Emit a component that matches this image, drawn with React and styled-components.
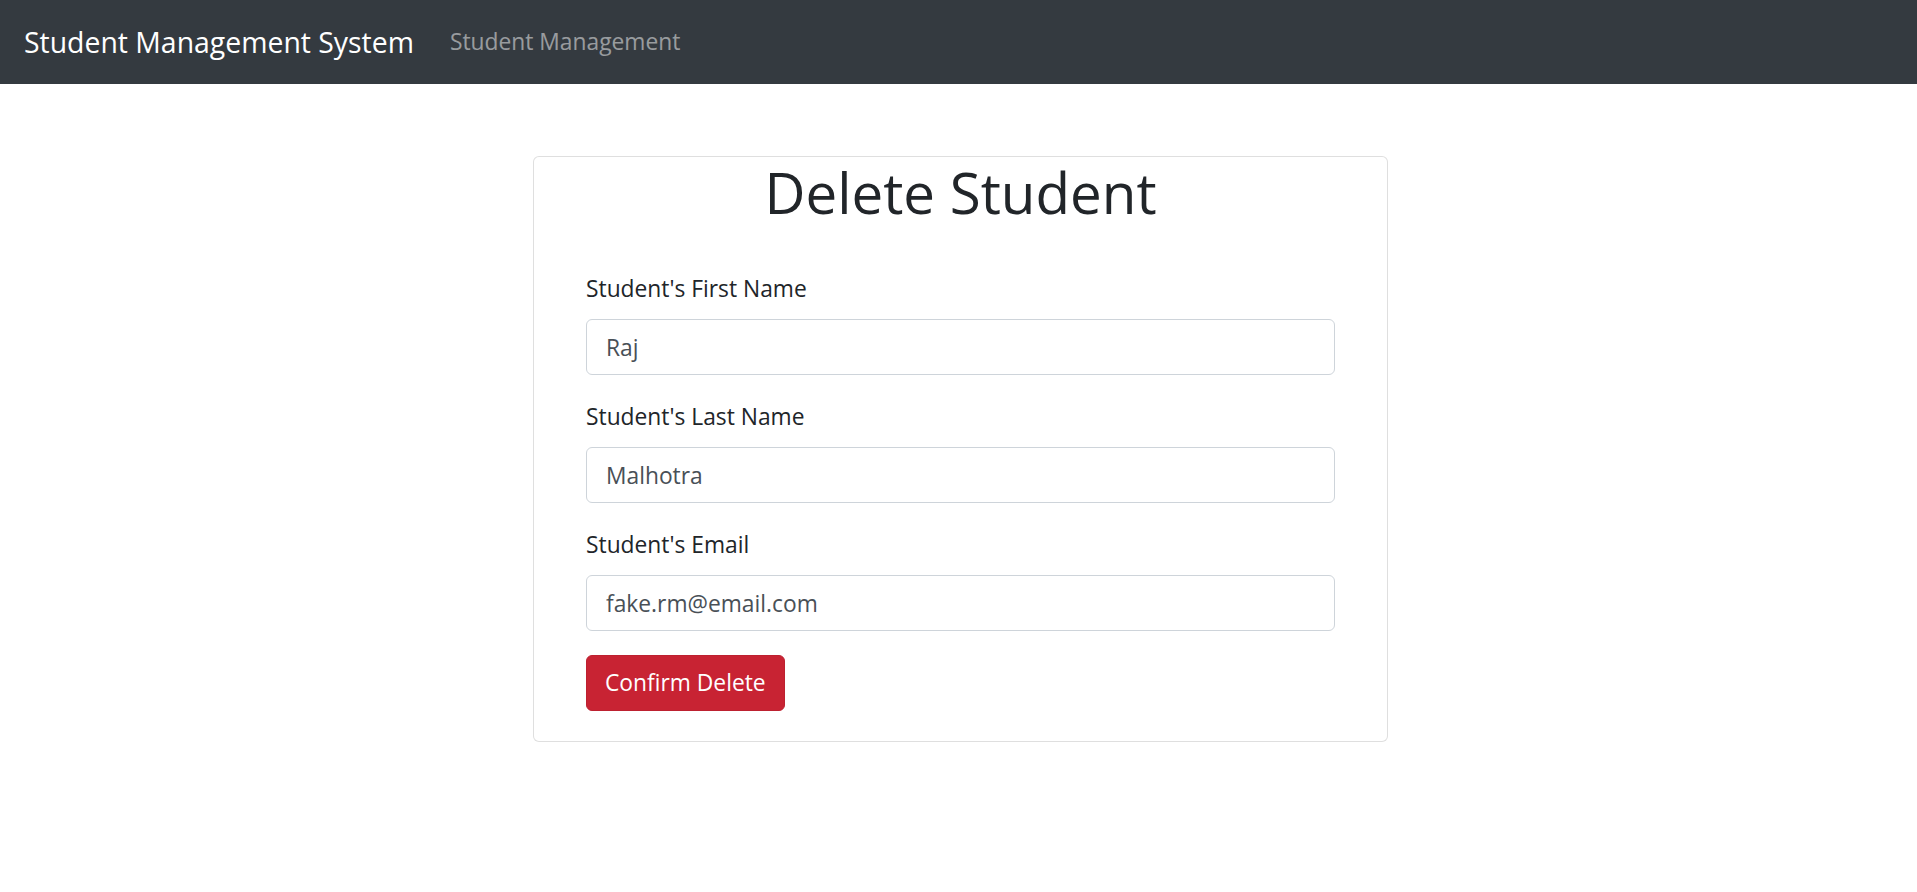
import React from 'react'
import styled, { createGlobalStyle } from 'styled-components'

const GlobalStyle = createGlobalStyle`
  body {
    margin: 0;
    background: #fff;
    font-family: "Open Sans", "Noto Sans", "Liberation Sans", sans-serif;
    color: #212529;
  }
`

const Navbar = styled.nav`
  height: 84px;
  box-sizing: border-box;
  padding: 12px 24px;
  background: #343a40;
  display: flex;
  align-items: center;
`

const Brand = styled.a`
  font-size: 28.4px;
  line-height: 45px;
  color: #fff;
  margin-right: 24px;
  text-decoration: none;
  white-space: nowrap;
`

const NavItem = styled.a`
  font-size: 22.8px;
  line-height: 36px;
  padding: 0 12px;
  color: rgba(255, 255, 255, 0.5);
  text-decoration: none;
`

const Page = styled.main`
  display: flex;
  justify-content: center;
  padding: 72px 0 0 4px;
`

const Card = styled.div`
  width: 855px;
  box-sizing: border-box;
  border: 1px solid rgba(0, 0, 0, 0.125);
  border-radius: 6px;
  background: #fff;
`

const Title = styled.h1`
  margin: 0 0 12px;
  font-size: 56.5px;
  font-weight: 400;
  line-height: 72px;
  text-align: center;
  color: #212529;
`

const CardBody = styled.form`
  padding: 30px 52px;
`

const FormGroup = styled.div`
  margin-bottom: 24px;
`

const Label = styled.label`
  display: block;
  font-size: 22.8px;
  line-height: 36px;
  margin-bottom: 12px;
  color: #212529;
`

const Input = styled.input`
  display: block;
  width: 100%;
  height: 56px;
  box-sizing: border-box;
  padding: 9px 18px 9px 19px;
  font-family: inherit;
  font-size: 22.8px;
  line-height: 36px;
  color: #495057;
  background: #fff;
  border: 1px solid #ced4da;
  border-radius: 6px;
  outline: none;
`

const DangerButton = styled.button`
  font-family: inherit;
  font-size: 22.8px;
  line-height: 36px;
  padding: 9px 18px;
  color: #fff;
  background: #c82333;
  border: 1px solid #bd2130;
  border-radius: 6px;
  cursor: pointer;
`

const fields = [
  { label: "Student's First Name", value: 'Raj' },
  { label: "Student's Last Name", value: 'Malhotra' },
  { label: "Student's Email", value: 'fake.rm@email.com' },
]

const App = () => {
  return (
    <>
      <GlobalStyle />
      <Navbar>
        <Brand href="#">Student Management System</Brand>
        <NavItem href="#">Student Management</NavItem>
      </Navbar>
      <Page>
        <Card>
          <Title>Delete Student</Title>
          <CardBody onSubmit={(e) => e.preventDefault()}>
            {fields.map((f) => (
              <FormGroup key={f.label}>
                <Label>{f.label}</Label>
                <Input type="text" defaultValue={f.value} readOnly />
              </FormGroup>
            ))}
            <DangerButton type="submit">Confirm Delete</DangerButton>
          </CardBody>
        </Card>
      </Page>
    </>
  )
}

export default App
